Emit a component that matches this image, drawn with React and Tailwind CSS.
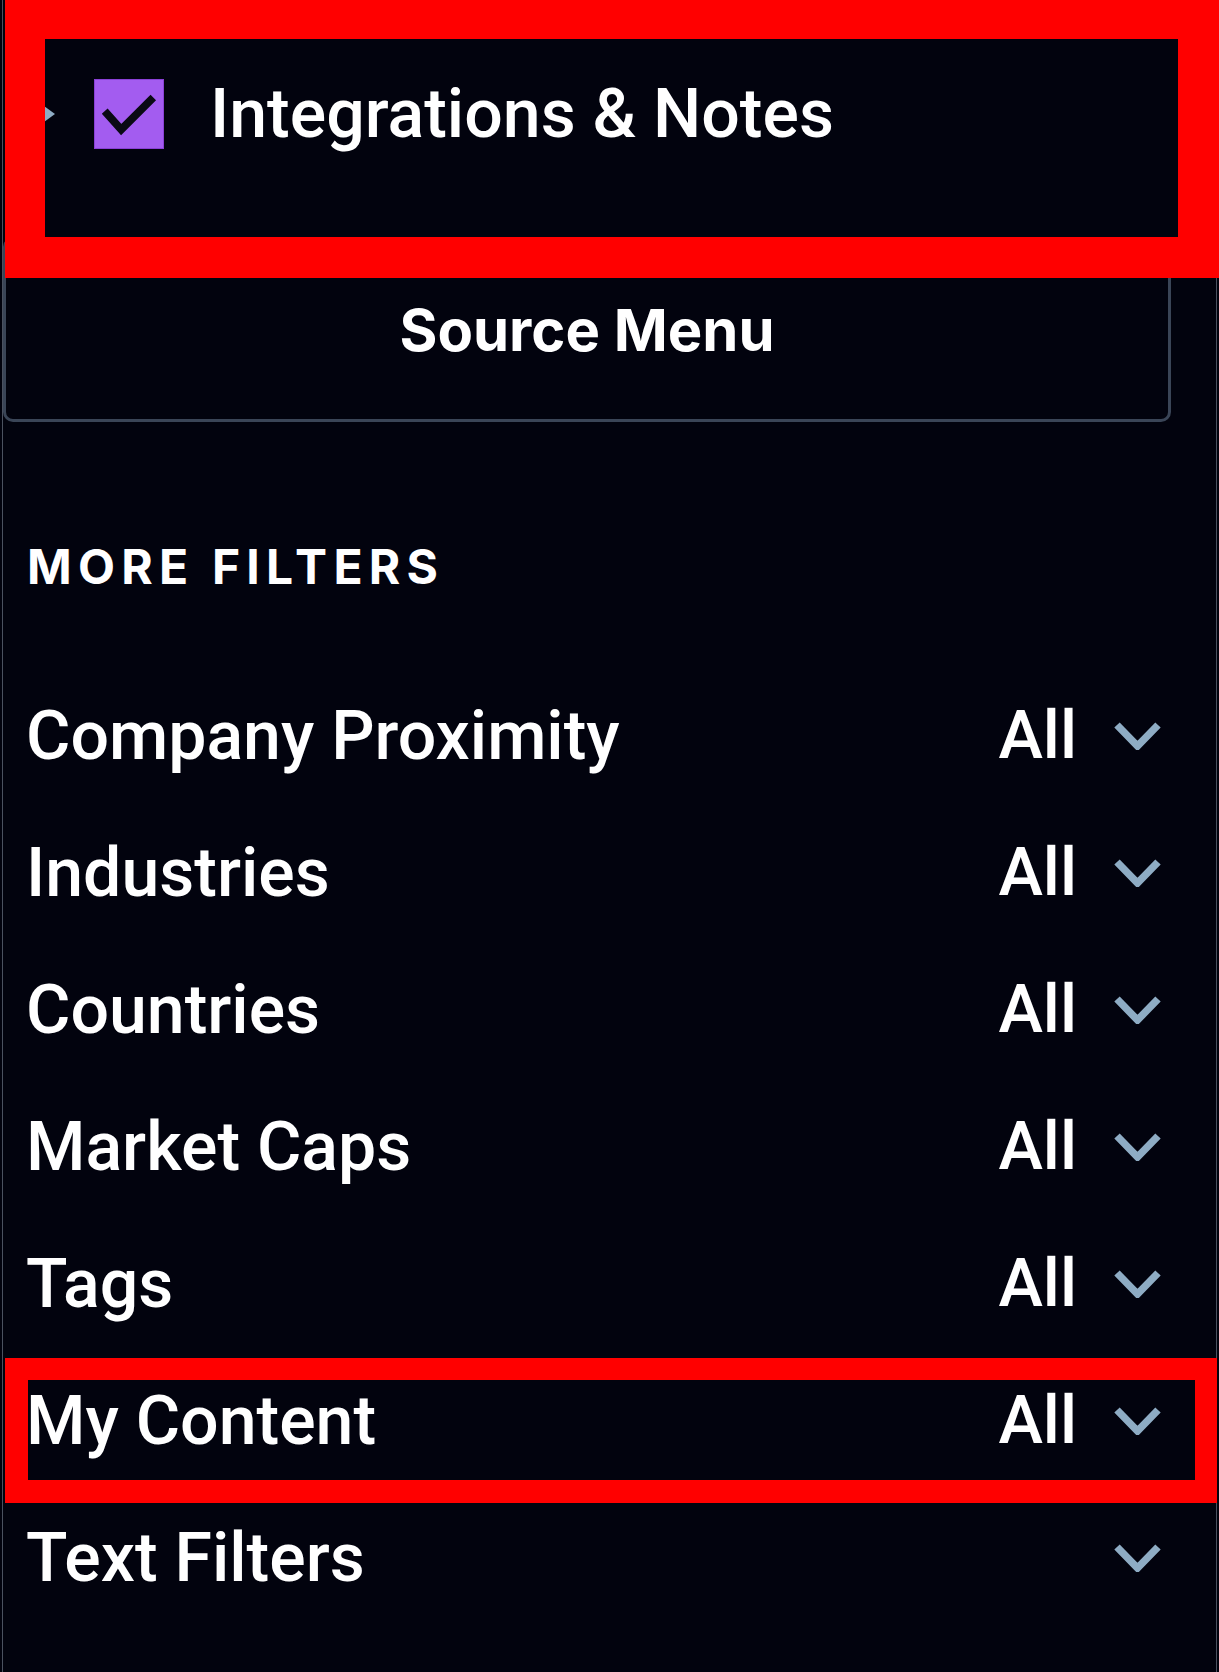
import React from 'react';

const filters = [
  { label: 'Company Proximity', value: 'All' },
  { label: 'Industries', value: 'All' },
  { label: 'Countries', value: 'All' },
  { label: 'Market Caps', value: 'All' },
  { label: 'Tags', value: 'All' },
  { label: 'My Content', value: 'All' },
  { label: 'Text Filters', value: '' },
];

const Chevron = () => (
  <svg width="47" height="28" viewBox="0 0 47 28" fill="none" className="shrink-0">
    <polyline
      points="3,3 23.5,24 44,3"
      stroke="#8eacc4"
      strokeWidth="7.5"
      strokeLinejoin="miter"
      fill="none"
    />
  </svg>
);

const App = () => {
  return (
    <div className="relative min-h-[1672px] w-full bg-[#02030e] overflow-hidden">
      <div className="mx-[2px] min-h-[1672px] border-x border-[#4b5260]">
        {/* Integrations row */}
        <div className="flex items-center pt-[79px] pb-[88px]">
          <svg width="14" height="18" viewBox="0 0 14 18" className="ml-[39px] shrink-0">
            <polygon points="2,1 13,9 2,17" fill="#8eacc4" />
          </svg>
          <div className="ml-[38px] flex h-[70px] w-[70px] shrink-0 items-center justify-center border border-[#8a40d6] bg-[#a35cf0]">
            <svg width="70" height="70" viewBox="0 0 70 70">
              <polyline
                points="10,32 27,51 60,18"
                stroke="#0a0a14"
                strokeWidth="8"
                fill="none"
              />
            </svg>
          </div>
          <span className="ml-[46px] font-['Roboto',sans-serif] text-[68px] font-medium leading-none text-white">
            Integrations &amp; Notes
          </span>
        </div>

        {/* Source menu button */}
        <div className="flex h-[185px] w-[1168px] items-center justify-center rounded-[10px] border-[3px] border-[#3a4557]">
          <span className="font-['Inter',sans-serif] text-[58px] font-bold leading-none text-white">
            Source Menu
          </span>
        </div>

        {/* More filters */}
        <div className="mt-[121px] pl-[24px] font-['Inter',sans-serif] text-[48px] font-bold leading-none tracking-[0.13em] text-white">
          MORE FILTERS
        </div>

        <div className="mt-[76px] flex flex-col pl-[23px] pr-[55px]">
          {filters.map((f) => (
            <div key={f.label} className="flex h-[137px] items-center justify-between">
              <span className="font-['Roboto',sans-serif] text-[68px] font-medium leading-none text-white">
                {f.label}
              </span>
              <div className="flex items-center gap-[37px]">
                {f.value && (
                  <span className="font-['Roboto',sans-serif] text-[67px] font-medium leading-none text-white">
                    {f.value}
                  </span>
                )}
                <Chevron />
              </div>
            </div>
          ))}
        </div>
      </div>

      {/* annotation frames */}
      <div className="pointer-events-none absolute left-[5px] top-0 h-[278px] w-[1214px] border-t-[39px] border-l-[40px] border-r-[41px] border-b-[41px] border-[#ff0000]" />
      <div className="pointer-events-none absolute left-[5px] top-[1358px] h-[145px] w-[1212px] border-t-[22px] border-l-[23px] border-r-[22px] border-b-[23px] border-[#ff0000]" />
    </div>
  );
};

export default App;
